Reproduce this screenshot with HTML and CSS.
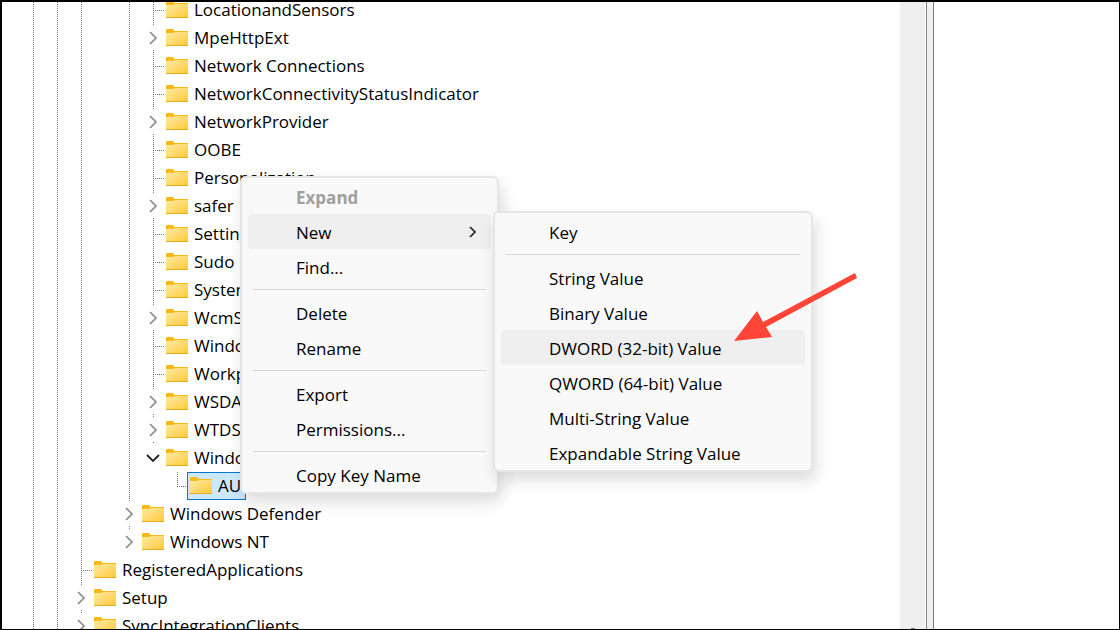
FILE: index.html
```html
<!DOCTYPE html>
<html lang="en">
<head>
    <meta charset="utf-8">
    <title>Registry Editor</title>
    <link rel="stylesheet" href="styles.css">
</head>
<body>
    <svg class="defs" width="0" height="0">
        <defs>
            <linearGradient id="fold" x1="0" y1="0" x2="1" y2="1">
                <stop offset="0" stop-color="#ffeaa6"/>
                <stop offset="1" stop-color="#ffc937"/>
            </linearGradient>
        </defs>
        <symbol id="folder" viewBox="0 0 22 17">
            <path d="M0 1Q0 0 1 0H7L8 1V2H22V6H0Z" fill="#fbb917"/>
            <path d="M0 4H7L9 3H22V17H0Z" fill="url(#fold)"/>
            <path d="M0 16H22V17H0Z" fill="#e9ab20"/>
        </symbol>
        <symbol id="right" viewBox="0 0 14 14">
            <path d="M4 1L10 7L4 13" fill="none" stroke="#8c8c8c" stroke-width="1.7"/>
        </symbol>
        <symbol id="down" viewBox="0 0 14 14">
            <path d="M1 4L7 10L13 4" fill="none" stroke="#222" stroke-width="1.8"/>
        </symbol>
    </svg>

    <div class="window">
        <div class="tree-pane">
            <ul class="tree">
                <li>
                    <ul>
                        <li>
                            <ul>
                                <li>
                                    <ul>
                                        <li class="last">
                                            <ul>
                                                <li>
                                                    <ul>
                                                        <li><div class="row"><span class="tick"></span><span class="key"><svg class="folder"><use href="#folder"/></svg>LocationandSensors</span></div></li>
                                                        <li><div class="row"><button class="toggle" aria-label="Expand"><svg><use href="#right"/></svg></button><span class="key"><svg class="folder"><use href="#folder"/></svg>MpeHttpExt</span></div></li>
                                                        <li><div class="row"><span class="tick"></span><span class="key"><svg class="folder"><use href="#folder"/></svg>Network Connections</span></div></li>
                                                        <li><div class="row"><span class="tick"></span><span class="key"><svg class="folder"><use href="#folder"/></svg>NetworkConnectivityStatusIndicator</span></div></li>
                                                        <li><div class="row"><button class="toggle" aria-label="Expand"><svg><use href="#right"/></svg></button><span class="key"><svg class="folder"><use href="#folder"/></svg>NetworkProvider</span></div></li>
                                                        <li><div class="row"><span class="tick"></span><span class="key"><svg class="folder"><use href="#folder"/></svg>OOBE</span></div></li>
                                                        <li><div class="row"><span class="tick"></span><span class="key"><svg class="folder"><use href="#folder"/></svg>Personalization</span></div></li>
                                                        <li><div class="row"><button class="toggle" aria-label="Expand"><svg><use href="#right"/></svg></button><span class="key"><svg class="folder"><use href="#folder"/></svg>safer</span></div></li>
                                                        <li><div class="row"><span class="tick"></span><span class="key"><svg class="folder"><use href="#folder"/></svg>SettingSync</span></div></li>
                                                        <li><div class="row"><span class="tick"></span><span class="key"><svg class="folder"><use href="#folder"/></svg>Sudo</span></div></li>
                                                        <li><div class="row"><span class="tick"></span><span class="key"><svg class="folder"><use href="#folder"/></svg>System</span></div></li>
                                                        <li><div class="row"><button class="toggle" aria-label="Expand"><svg><use href="#right"/></svg></button><span class="key"><svg class="folder"><use href="#folder"/></svg>WcmSvc</span></div></li>
                                                        <li><div class="row"><span class="tick"></span><span class="key"><svg class="folder"><use href="#folder"/></svg>Windows</span></div></li>
                                                        <li><div class="row"><span class="tick"></span><span class="key"><svg class="folder"><use href="#folder"/></svg>Workplace</span></div></li>
                                                        <li><div class="row"><button class="toggle" aria-label="Expand"><svg><use href="#right"/></svg></button><span class="key"><svg class="folder"><use href="#folder"/></svg>WSDAPI</span></div></li>
                                                        <li><div class="row"><button class="toggle" aria-label="Expand"><svg><use href="#right"/></svg></button><span class="key"><svg class="folder"><use href="#folder"/></svg>WTDS</span></div></li>
                                                        <li class="last">
                                                            <div class="row"><button class="toggle" aria-label="Collapse"><svg><use href="#down"/></svg></button><span class="key"><svg class="folder"><use href="#folder"/></svg>Windows</span></div>
                                                            <ul>
                                                                <li class="end"><div class="row"><span class="tick"></span><span class="key selected"><svg class="folder"><use href="#folder"/></svg>AU</span></div></li>
                                                            </ul>
                                                        </li>
                                                    </ul>
                                                </li>
                                                <li><div class="row"><button class="toggle" aria-label="Expand"><svg><use href="#right"/></svg></button><span class="key"><svg class="folder"><use href="#folder"/></svg>Windows Defender</span></div></li>
                                                <li class="end"><div class="row"><button class="toggle" aria-label="Expand"><svg><use href="#right"/></svg></button><span class="key"><svg class="folder"><use href="#folder"/></svg>Windows NT</span></div></li>
                                            </ul>
                                        </li>
                                    </ul>
                                </li>
                                <li><div class="row"><span class="tick"></span><span class="key"><svg class="folder"><use href="#folder"/></svg>RegisteredApplications</span></div></li>
                                <li><div class="row"><button class="toggle" aria-label="Expand"><svg><use href="#right"/></svg></button><span class="key"><svg class="folder"><use href="#folder"/></svg>Setup</span></div></li>
                                <li><div class="row"><button class="toggle" aria-label="Expand"><svg><use href="#right"/></svg></button><span class="key"><svg class="folder"><use href="#folder"/></svg>SyncIntegrationClients</span></div></li>
                            </ul>
                        </li>
                    </ul>
                </li>
            </ul>
            <div class="scrollbar"><span class="scroll-arrow"></span></div>
        </div>
        <div class="splitter"></div>
        <div class="value-pane"></div>

        <div class="menu context-menu">
            <button class="item" disabled>Expand</button>
            <div class="has-submenu">
                <button class="item active">New
                    <svg class="more" viewBox="0 0 8 12"><path d="M1 1L6 6L1 11" fill="none" stroke="#222" stroke-width="1.7"/></svg>
                </button>
                <div class="menu submenu">
                    <button class="item">Key</button>
                    <hr>
                    <button class="item">String Value</button>
                    <button class="item">Binary Value</button>
                    <button class="item active">DWORD (32-bit) Value</button>
                    <button class="item">QWORD (64-bit) Value</button>
                    <button class="item">Multi-String Value</button>
                    <button class="item">Expandable String Value</button>
                </div>
            </div>
            <button class="item">Find...</button>
            <hr>
            <button class="item">Delete</button>
            <button class="item">Rename</button>
            <hr>
            <button class="item">Export</button>
            <button class="item">Permissions...</button>
            <hr>
            <button class="item">Copy Key Name</button>
        </div>

        <svg class="pointer" viewBox="0 0 124 70">
            <path d="M0 68L23 38L29 49L121 0L123 5L32 54L38 64Z" fill="#ff4438"/>
        </svg>
    </div>
</body>
</html>
```

FILE: styles.css
```css
* {
    box-sizing: border-box;
}
body {
    margin: 0;
    font-family: "Open Sans", "Noto Sans", sans-serif;
    font-size: 17px;
    color: #000;
    background-color: #fff;
}
ul {
    list-style: none;
    margin: 0;
    padding: 0;
}
button {
    font: inherit;
    color: inherit;
    border: none;
    padding: 0;
    background: none;
}
.defs {
    position: absolute;
}
.window {
    position: relative;
    display: flex;
    height: 100vh;
    border: solid #000;
    border-width: 2px 1px 1px 2px;
    overflow: hidden;
}

/* tree */
.tree-pane {
    flex: 5 1 0;
    display: flex;
    overflow: hidden;
    border-right: 1px solid #7d8791;
}
.tree {
    flex: 1;
    margin-top: -6px;
    padding-left: 19px;
}
.tree ul {
    padding-left: 24px;
}
.tree li {
    position: relative;
}
.tree li::before {
    content: "";
    position: absolute;
    left: 12px;
    top: 0;
    bottom: 0;
    width: 1px;
    background: repeating-linear-gradient(#777 0 1px, transparent 1px 2px);
}
.tree li.last::before {
    display: none;
}
.tree li.end::before {
    bottom: 50%;
}
.row {
    position: relative;
    display: flex;
    align-items: center;
    height: 28px;
}
.tick {
    width: 24px;
    height: 1px;
    background: repeating-linear-gradient(90deg, #777 0 1px, transparent 1px 2px);
    background-position: 12px 0;
    background-repeat: no-repeat;
}
.toggle {
    display: flex;
    align-items: center;
    justify-content: center;
    width: 24px;
    height: 24px;
    background-color: #fff;
}
.toggle svg {
    width: 14px;
    height: 14px;
}
.key {
    display: flex;
    align-items: center;
    gap: 6px;
    height: 28px;
    margin-left: -2px;
    padding: 0 4px 2px 2px;
    border: 1px solid transparent;
    white-space: nowrap;
}
.key.selected {
    background-color: #cce8ff;
    border-color: #0078d4;
}
.folder {
    width: 22px;
    height: 17px;
}

.scrollbar {
    display: flex;
    align-items: flex-end;
    justify-content: center;
    width: 26px;
    background-color: #efefef;
    border-right: 1px solid #fff;
}
.scroll-arrow {
    width: 4px;
    height: 1px;
    background-color: #777;
}
.splitter {
    width: 6px;
    background-color: #f0f0f0;
}
.value-pane {
    flex: 1 1 0;
    border-left: 1px solid #7f7b80;
}

/* menus */
.menu {
    position: absolute;
    padding: 1px 6px 0;
    background-color: #f9f9f9;
    border: 2px solid #e5e5e5;
    border-radius: 6px;
    box-shadow: 3px 8px 16px rgba(0, 0, 0, 0.14);
}
.context-menu {
    left: 238px;
    top: 174px;
    width: 259px;
}
.has-submenu {
    position: relative;
}
.submenu {
    left: 100%;
    top: -3px;
    width: 320px;
    margin-left: 2px;
}
.item {
    display: flex;
    align-items: center;
    justify-content: space-between;
    width: 100%;
    height: 35px;
    padding: 2px 14px 0 48px;
    border-radius: 4px;
}
.item.active {
    background-color: #efefef;
}
.item:disabled {
    color: #a0a0a0;
    font-weight: bold;
}
.more {
    width: 8px;
    height: 12px;
    margin-bottom: 2px;
}
hr {
    height: 1px;
    margin: 5px;
    border: none;
    background-color: #d6d6d6;
}

.pointer {
    position: absolute;
    left: 732px;
    top: 271px;
    width: 124px;
    height: 70px;
}
```
